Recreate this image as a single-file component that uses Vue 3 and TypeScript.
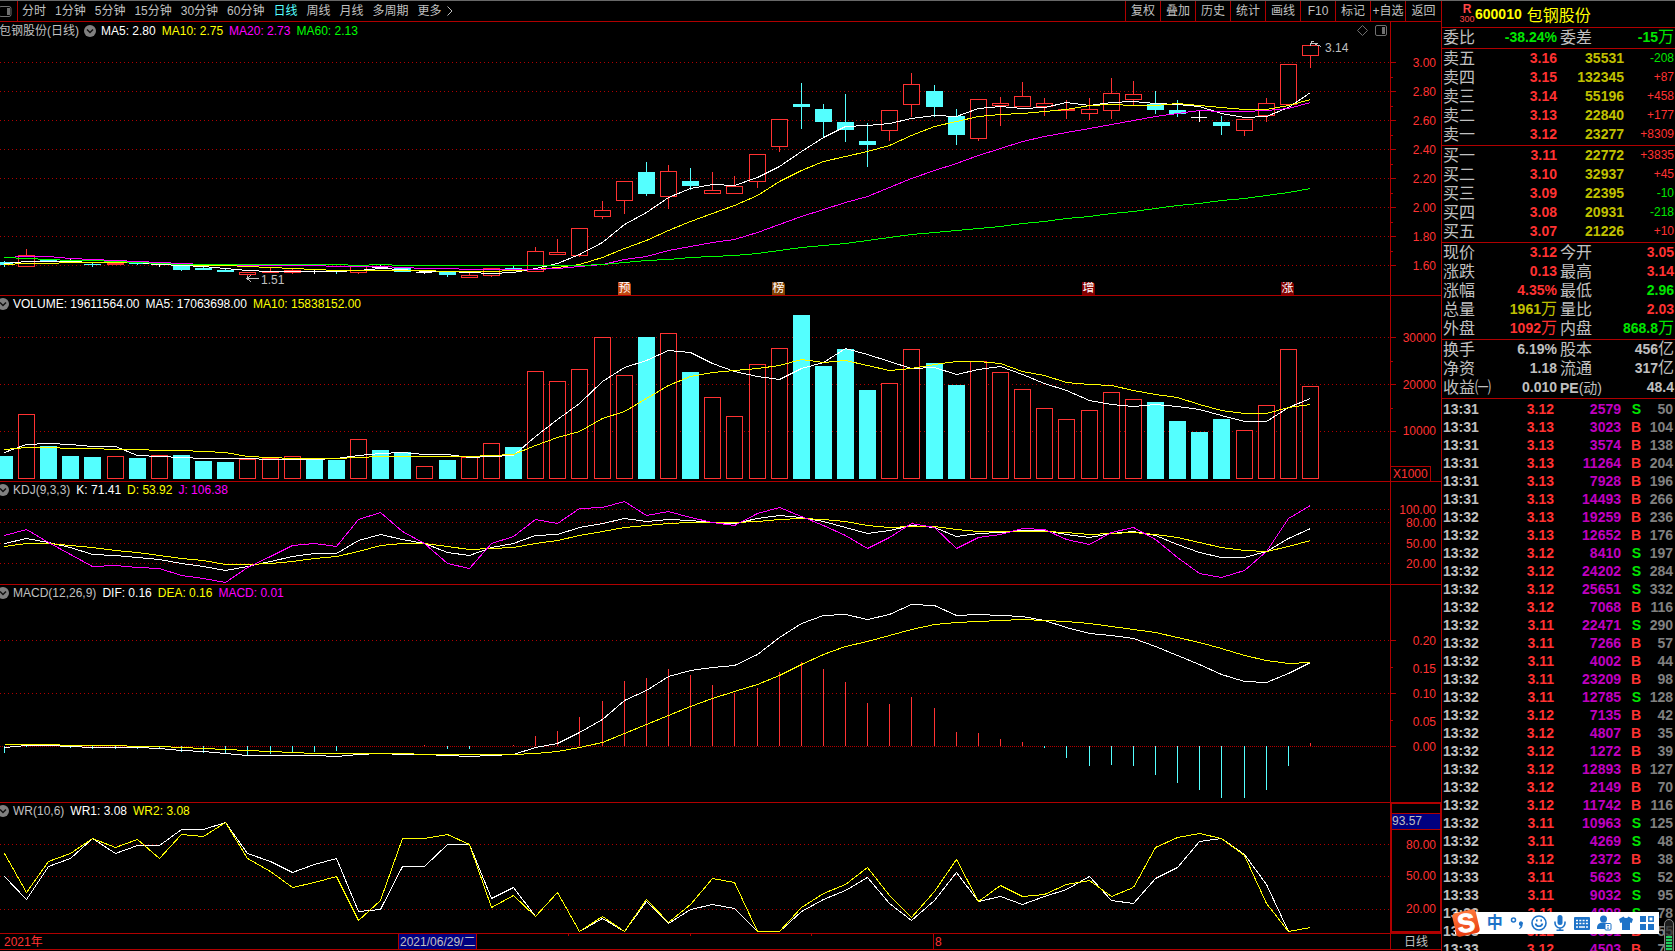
<script setup lang="ts">
type Kind = 'u' | 'd' | 'w'
interface Series { color: string; ys: number[] }
interface Label { y: number; text: string }
interface Tag { text: string; color: string }
interface Mark { x: number; text: string; color: string }
interface Panel {
  id: string
  top: number
  height: number
  name?: string
  title?: string
  tags: Tag[]
  grid: number[]
  dense?: number
  ticks: number[]
  minor: number[]
  labels: Label[]
  series: Series[]
}

const W = 1390
const WHITE = '#ffffff'
const YELLOW = '#ffff00'
const PINK = '#ff00ff'
const GREEN = '#00ff00'

const xAt = (i: number) => Math.floor(4.4 + i * 22.136)
const points = (ys: number[]) => ys.map((y, i) => `${xAt(i) + 0.5},${y + 0.5}`).join(' ')
const pct = (v: number, from: number, size: number) => `${((v - from) / size) * 100}%`

const periods = ['分时', '1分钟', '5分钟', '15分钟', '30分钟', '60分钟', '日线', '周线', '月线', '多周期', '更多']
const tools = ['复权', '叠加', '历史', '统计', '画线', 'F10', '标记', '+自选', '返回']

// kind, high, body top, body bottom, low
const candles: [Kind, number, number, number, number][] = [
  ['d', 261, 262, 265, 267], ['u', 249, 255, 267, 267], ['d', 260, 260, 261, 261], ['w', 258, 262, 262, 263],
  ['d', 263, 264, 265, 267], ['u', 260, 263, 265, 265], ['d', 262, 263, 264, 265], ['w', 263, 264, 264, 267],
  ['d', 263, 265, 270, 271], ['d', 265, 268, 270, 270], ['d', 268, 270, 272, 272], ['u', 272, 272, 275, 277],
  ['u', 267, 271, 273, 273], ['u', 269, 270, 273, 274], ['w', 270, 271, 271, 274], ['d', 271, 271, 272, 274],
  ['u', 266, 266, 273, 274], ['w', 265, 267, 267, 268], ['d', 268, 268, 272, 272], ['w', 271, 272, 272, 274],
  ['d', 271, 271, 275, 277], ['u', 273, 275, 278, 278], ['u', 268, 268, 276, 277], ['d', 266, 268, 269, 271],
  ['u', 247, 251, 272, 272], ['u', 239, 252, 255, 255], ['u', 228, 228, 256, 257], ['u', 201, 210, 217, 219],
  ['u', 181, 181, 201, 214], ['d', 162, 172, 194, 196], ['u', 165, 171, 197, 209], ['d', 168, 181, 186, 190],
  ['u', 172, 190, 194, 194], ['u', 176, 186, 194, 194], ['u', 154, 154, 182, 188], ['u', 119, 119, 147, 152],
  ['d', 83, 104, 107, 129], ['d', 104, 109, 122, 138], ['d', 94, 122, 130, 142], ['d', 123, 141, 145, 167],
  ['u', 110, 110, 131, 141], ['u', 73, 84, 105, 117], ['d', 85, 91, 107, 117], ['d', 109, 116, 135, 145],
  ['u', 99, 99, 139, 141], ['u', 97, 103, 106, 126], ['u', 82, 96, 107, 107], ['u', 98, 103, 107, 116],
  ['u', 100, 109, 111, 119], ['u', 98, 109, 114, 120], ['u', 78, 93, 111, 119], ['u', 81, 94, 100, 105],
  ['d', 91, 104, 110, 114], ['d', 100, 110, 114, 117], ['w', 111, 117, 117, 122], ['d', 116, 122, 126, 135],
  ['u', 119, 119, 131, 136], ['u', 98, 103, 116, 122], ['u', 64, 64, 105, 105], ['u', 45, 45, 56, 68],
]

const volumeBase = 479
const volumes = [
  456, 414, 446, 456, 457, 456, 458, 455, 455, 461, 462, 459, 458, 456, 459, 460, 439, 450, 452, 466,
  460, 457, 443, 447, 371, 381, 369, 337, 375, 337, 333, 372, 397, 416, 364, 348, 315, 366, 349, 390,
  383, 349, 363, 385, 361, 372, 389, 408, 419, 410, 392, 399, 402, 421, 432, 419, 430, 405, 349, 386,
]
// flat days that closed above the day before
const flatUp = [7, 19]
const volumeUp = (i: number) => candles[i][0] === 'u' || flatUp.includes(i)

const macdZero = 746
const macd = [
  753, 747, 746, 748, 749, 749, 749, 749, 752, 753, 754, 755, 754, 752, 752, 751, 746, 746, 746, 745,
  749, 749, 746, 745, 736, 731, 717, 701, 681, 678, 669, 675, 685, 693, 688, 672, 662, 669, 682, 703,
  704, 697, 708, 732, 733, 739, 742, 748, 758, 766, 765, 766, 775, 783, 790, 798, 798, 790, 766, 743,
]

const panels: Panel[] = [
  {
    id: 'price', top: 22, height: 273, name: '包钢股份(日线)',
    tags: [
      { text: 'MA5: 2.80', color: WHITE }, { text: 'MA10: 2.75', color: YELLOW },
      { text: 'MA20: 2.73', color: PINK }, { text: 'MA60: 2.13', color: GREEN },
    ],
    grid: [62, 91, 120, 149, 178, 207, 236, 265],
    ticks: [62, 91, 120, 149, 178, 207, 236, 265],
    minor: [77, 106, 135, 164, 193, 222, 251],
    labels: ['3.00', '2.80', '2.60', '2.40', '2.20', '2.00', '1.80', '1.60'].map((text, i) => ({ text, y: 62 + i * 29 })),
    series: [
      { color: WHITE, ys: [263, 261, 261, 261, 262, 262, 262, 264, 265, 266, 268, 270, 271, 271, 271, 271, 270, 268, 269, 271, 271, 272, 273, 272, 268, 263, 254, 242, 224, 212, 197, 188, 184, 185, 177, 166, 151, 137, 126, 125, 123, 118, 115, 116, 108, 106, 108, 107, 102, 105, 102, 101, 103, 104, 106, 113, 117, 116, 107, 92] },
      { color: YELLOW, ys: [264, 263, 263, 262, 262, 262, 262, 263, 264, 265, 265, 266, 267, 268, 269, 270, 270, 270, 270, 270, 271, 271, 271, 270, 269, 267, 264, 257, 248, 240, 230, 221, 213, 205, 195, 181, 170, 161, 156, 151, 145, 135, 126, 121, 116, 114, 113, 111, 109, 105, 104, 105, 105, 103, 105, 107, 109, 109, 105, 99] },
      { color: PINK, ys: [257, 256, 256, 258, 259, 260, 261, 262, 263, 264, 264, 265, 265, 265, 265, 266, 266, 266, 267, 268, 268, 269, 269, 269, 269, 268, 266, 264, 259, 256, 250, 246, 242, 239, 232, 224, 216, 209, 202, 196, 187, 178, 170, 163, 155, 148, 141, 136, 132, 128, 124, 120, 116, 113, 110, 111, 111, 110, 108, 102] },
      { color: GREEN, ys: [257, 258, 259, 260, 260, 261, 262, 263, 264, 264, 264, 264, 264, 264, 264, 264, 265, 264, 265, 265, 265, 265, 265, 265, 265, 265, 265, 264, 262, 260, 259, 257, 256, 255, 253, 250, 247, 245, 243, 240, 237, 234, 232, 230, 228, 226, 223, 221, 218, 216, 213, 211, 208, 205, 203, 200, 198, 195, 192, 188] },
    ],
  },
  {
    id: 'volume', top: 296, height: 185,
    tags: [
      { text: 'VOLUME: 19611564.00', color: WHITE }, { text: 'MA5: 17063698.00', color: WHITE },
      { text: 'MA10: 15838152.00', color: YELLOW },
    ],
    grid: [337, 384, 431], ticks: [337, 384, 431], minor: [361, 408],
    labels: [{ y: 337, text: '30000' }, { y: 384, text: '20000' }, { y: 431, text: '10000' }],
    series: [
      { color: WHITE, ys: [452, 444, 443, 444, 446, 446, 455, 456, 457, 458, 458, 458, 459, 459, 459, 458, 455, 453, 452, 454, 454, 457, 456, 455, 436, 419, 403, 381, 367, 360, 350, 352, 363, 371, 376, 379, 368, 362, 348, 354, 361, 368, 367, 374, 369, 366, 374, 383, 390, 400, 404, 406, 404, 406, 409, 415, 421, 421, 407, 398] },
      { color: YELLOW, ys: [449, 447, 447, 448, 448, 449, 449, 450, 450, 451, 452, 456, 457, 458, 458, 458, 457, 456, 456, 456, 456, 456, 455, 454, 445, 437, 431, 418, 411, 398, 385, 376, 372, 370, 368, 365, 359, 362, 360, 365, 370, 368, 364, 361, 361, 363, 371, 375, 382, 384, 385, 390, 394, 397, 404, 410, 413, 413, 407, 404] },
    ],
  },
  {
    id: 'kdj', top: 482, height: 102, title: 'KDJ(9,3,3)',
    tags: [{ text: 'K: 71.41', color: WHITE }, { text: 'D: 53.92', color: YELLOW }, { text: 'J: 106.38', color: PINK }],
    grid: [509, 522, 543, 563], ticks: [], minor: [],
    labels: [{ y: 509, text: '100.00' }, { y: 522, text: '80.00' }, { y: 543, text: '50.00' }, { y: 563, text: '20.00' }],
    series: [
      { color: WHITE, ys: [543, 538, 542, 547, 554, 555, 557, 559, 563, 566, 570, 566, 561, 556, 553, 553, 540, 534, 539, 543, 552, 555, 547, 543, 535, 534, 527, 523, 518, 521, 519, 520, 522, 523, 518, 515, 517, 521, 527, 533, 530, 525, 527, 536, 533, 532, 530, 530, 534, 537, 533, 531, 535, 544, 552, 557, 557, 551, 538, 528] },
      { color: YELLOW, ys: [546, 543, 543, 545, 547, 550, 552, 555, 558, 560, 564, 564, 563, 561, 558, 556, 551, 545, 543, 543, 546, 549, 548, 547, 543, 540, 535, 531, 527, 525, 523, 522, 522, 522, 521, 519, 518, 519, 521, 525, 527, 526, 526, 529, 531, 531, 531, 531, 532, 534, 533, 532, 534, 537, 542, 547, 550, 551, 546, 540] },
      { color: PINK, ys: [535, 529, 542, 554, 566, 565, 567, 568, 575, 578, 582, 567, 556, 545, 543, 546, 519, 512, 531, 543, 563, 568, 543, 536, 519, 523, 508, 507, 501, 515, 511, 517, 522, 525, 513, 507, 516, 525, 535, 548, 537, 523, 527, 548, 537, 534, 528, 529, 539, 544, 532, 527, 539, 557, 573, 577, 570, 551, 518, 505] },
    ],
  },
  {
    id: 'macd', top: 585, height: 217, title: 'MACD(12,26,9)',
    tags: [{ text: 'DIF: 0.16', color: WHITE }, { text: 'DEA: 0.16', color: YELLOW }, { text: 'MACD: 0.01', color: PINK }],
    grid: [640, 693], dense: 746, ticks: [640, 693, 746], minor: [667, 720],
    labels: [{ y: 640, text: '0.20' }, { y: 668, text: '0.15' }, { y: 693, text: '0.10' }, { y: 721, text: '0.05' }, { y: 746, text: '0.00' }],
    series: [
      { color: WHITE, ys: [747, 745, 745, 746, 747, 747, 747, 748, 750, 751, 753, 755, 755, 755, 755, 756, 754, 753, 754, 754, 755, 756, 755, 754, 747, 743, 732, 719, 700, 690, 676, 670, 667, 665, 654, 637, 623, 615, 614, 619, 614, 604, 605, 615, 614, 615, 616, 620, 627, 633, 635, 638, 646, 655, 664, 674, 681, 682, 673, 662] },
      { color: YELLOW, ys: [744, 744, 744, 745, 745, 745, 746, 746, 747, 748, 749, 750, 751, 752, 753, 753, 753, 753, 753, 754, 754, 754, 754, 754, 753, 751, 747, 742, 733, 724, 715, 706, 698, 691, 684, 675, 664, 654, 646, 641, 635, 629, 624, 622, 621, 620, 619, 620, 621, 623, 626, 629, 632, 637, 642, 648, 655, 660, 663, 662] },
    ],
  },
  {
    id: 'wr', top: 803, height: 130, title: 'WR(10,6)',
    tags: [{ text: 'WR1: 3.08', color: WHITE }, { text: 'WR2: 3.08', color: YELLOW }],
    grid: [844, 876, 909], ticks: [], minor: [],
    labels: [{ y: 844, text: '80.00' }, { y: 876, text: '50.00' }, { y: 910, text: '20.00' }],
    series: [
      { color: WHITE, ys: [876, 899, 866, 858, 838, 853, 845, 845, 829, 829, 822, 853, 861, 872, 864, 858, 911, 909, 866, 866, 844, 844, 898, 887, 916, 892, 931, 918, 931, 901, 923, 909, 904, 908, 931, 931, 911, 899, 890, 877, 903, 920, 900, 872, 901, 896, 904, 896, 889, 876, 900, 903, 878, 867, 841, 838, 854, 884, 931, 927] },
      { color: YELLOW, ys: [853, 892, 861, 853, 838, 847, 839, 858, 834, 836, 822, 858, 871, 887, 882, 876, 920, 900, 838, 838, 834, 844, 907, 895, 916, 892, 931, 916, 931, 899, 922, 904, 878, 882, 931, 931, 907, 893, 884, 867, 895, 917, 891, 859, 901, 885, 896, 894, 884, 880, 896, 887, 847, 837, 833, 838, 855, 903, 931, 927] },
    ],
  },
]

const marks: Mark[] = [
  { x: 618, text: '预', color: '#c04810' },
  { x: 772, text: '榜', color: '#804000' },
  { x: 1082, text: '增', color: '#800000' },
  { x: 1281, text: '涨', color: '#800000' },
]

const dateTicks = [568, 690, 811]

const sells = [
  ['卖五', '3.16', '35531', '-208'], ['卖四', '3.15', '132345', '+87'], ['卖三', '3.14', '55196', '+458'],
  ['卖二', '3.13', '22840', '+177'], ['卖一', '3.12', '23277', '+8309'],
]
const buys = [
  ['买一', '3.11', '22772', '+3835'], ['买二', '3.10', '32937', '+45'], ['买三', '3.09', '22395', '-10'],
  ['买四', '3.08', '20931', '-218'], ['买五', '3.07', '21226', '+10'],
]
const books = [sells, buys]

interface Stat { label: string; value: string; unit?: string; tone: string }
const ratio: Stat[][] = [[
  { label: '委比', value: '-38.24%', tone: 'green' }, { label: '委差', value: '-15', unit: '万', tone: 'green' },
]]
const quote: Stat[][] = [
  [{ label: '现价', value: '3.12', tone: 'red' }, { label: '今开', value: '3.05', tone: 'red' }],
  [{ label: '涨跌', value: '0.13', tone: 'red' }, { label: '最高', value: '3.14', tone: 'red' }],
  [{ label: '涨幅', value: '4.35%', tone: 'red' }, { label: '最低', value: '2.96', tone: 'green' }],
  [{ label: '总量', value: '1961', unit: '万', tone: 'gold' }, { label: '量比', value: '2.03', tone: 'red' }],
  [{ label: '外盘', value: '1092', unit: '万', tone: 'red' }, { label: '内盘', value: '868.8', unit: '万', tone: 'green' }],
]
const basics: Stat[][] = [
  [{ label: '换手', value: '6.19%', tone: 'gray' }, { label: '股本', value: '456', unit: '亿', tone: 'gray' }],
  [{ label: '净资', value: '1.18', tone: 'gray' }, { label: '流通', value: '317', unit: '亿', tone: 'gray' }],
  [{ label: '收益㈠', value: '0.010', tone: 'gray' }, { label: 'PE(动)', value: '48.4', tone: 'gray' }],
]
const stats = [quote, basics]

const trades = `13:31 3.12 2579 S 50
13:31 3.13 3023 B 104
13:31 3.13 3574 B 138
13:31 3.13 11264 B 204
13:31 3.13 7928 B 196
13:31 3.13 14493 B 266
13:32 3.13 19259 B 236
13:32 3.13 12652 B 176
13:32 3.12 8410 S 197
13:32 3.12 24202 S 284
13:32 3.12 25651 S 332
13:32 3.12 7068 B 116
13:32 3.11 22471 S 290
13:32 3.11 7266 B 57
13:32 3.11 4002 B 44
13:32 3.11 23209 B 98
13:32 3.11 12785 S 128
13:32 3.12 7135 B 42
13:32 3.12 4807 B 35
13:32 3.12 1272 B 39
13:32 3.12 12893 B 127
13:32 3.12 2149 B 70
13:32 3.12 11742 B 116
13:32 3.11 10963 S 125
13:32 3.11 4269 S 48
13:32 3.12 2372 B 38
13:33 3.11 5623 S 52
13:33 3.11 9032 S 95
13:33 3.11 4998 S 78
13:33 3.12 8861 B 55
13:33 3.12 4503 B 70`.split('\n').map((row) => row.split(' '))
</script>

<template>
  <div class="app">
    <main class="charts">
      <nav class="toolbar">
        <button class="toggle" aria-label="侧栏">
          <svg width="12" height="11" viewBox="0 0 12 11"><rect x="-1" y="0.5" width="12" height="10" rx="2" fill="none" stroke="#707070" /><rect x="7" y="2" width="3" height="7" fill="#707070" /></svg>
        </button>
        <div class="periods">
          <button v-for="p in periods" :key="p" :class="{ active: p === '日线' }">{{ p }}</button>
          <svg class="more" width="6" height="10" viewBox="0 0 6 10"><path d="M.5.5 5 5 .5 9.5" fill="none" stroke="#c0c0c0" /></svg>
        </div>
        <div class="tools">
          <button v-for="t in tools" :key="t">{{ t }}</button>
        </div>
      </nav>

      <section v-for="p in panels" :key="p.id" class="panel" :class="p.id">
        <div class="plot">
          <svg class="canvas" :viewBox="`0 ${p.top} ${W} ${p.height}`" preserveAspectRatio="none">
            <line v-for="g in p.grid" :key="g" class="grid" x1="0" :x2="W" :y1="g + 0.5" :y2="g + 0.5" />
            <line v-if="p.dense" class="grid dense" x1="0" :x2="W" :y1="p.dense + 0.5" :y2="p.dense + 0.5" />

            <g v-if="p.id === 'price'">
              <g v-for="(c, i) in candles" :key="i" :class="c[0]">
                <template v-if="c[0] === 'u'">
                  <rect :x="xAt(i) - 7.5" :y="c[2] + 0.5" width="16" :height="Math.max(c[3] - c[2] - 1, 1)" />
                  <line v-if="c[1] < c[2]" :x1="xAt(i) + 0.5" :x2="xAt(i) + 0.5" :y1="c[1]" :y2="c[2]" />
                  <line v-if="c[4] > c[3]" :x1="xAt(i) + 0.5" :x2="xAt(i) + 0.5" :y1="c[3]" :y2="c[4]" />
                </template>
                <template v-else-if="c[0] === 'd'">
                  <rect :x="xAt(i) - 8" :y="c[2]" width="17" :height="c[3] - c[2]" />
                  <line :x1="xAt(i) + 0.5" :x2="xAt(i) + 0.5" :y1="c[1]" :y2="c[4]" />
                </template>
                <template v-else>
                  <line :x1="xAt(i) - 8" :x2="xAt(i) + 8" :y1="c[2] + 0.5" :y2="c[2] + 0.5" />
                  <line :x1="xAt(i) + 0.5" :x2="xAt(i) + 0.5" :y1="c[1]" :y2="c[4]" />
                </template>
              </g>
              <path class="pointer" d="M258.5 278.5H247M251 275l-4 3.5 4 3.5M247.5 278v-2" />
              <path class="pointer" d="M1321 46.500 1311 42.500M1310.500 46V43M1310 43.500H1318M1311 41.500h3" />
            </g>

            <g v-if="p.id === 'volume'">
              <g v-for="(v, i) in volumes" :key="i" :class="volumeUp(i) ? 'u' : 'd'">
                <rect v-if="volumeUp(i)" :x="xAt(i) - 7.5" :y="v + 0.5" width="16" :height="volumeBase - v - 1" />
                <rect v-else :x="xAt(i) - 8" :y="v" width="17" :height="volumeBase - v" />
              </g>
            </g>

            <g v-if="p.id === 'macd'">
              <line v-for="(m, i) in macd" :key="i" :class="m < macdZero ? 'bar-up' : 'bar-down'" :x1="xAt(i) + 0.5" :x2="xAt(i) + 0.5" :y1="macdZero" :y2="m" />
            </g>

            <polyline v-for="(s, i) in p.series" :key="i" :points="points(s.ys)" fill="none" :stroke="s.color" />
          </svg>

          <header class="title">
            <span v-if="p.name" class="name">{{ p.name }}</span>
            <button class="fold" aria-label="指标菜单">
              <svg width="12" height="12" viewBox="0 0 12 12"><circle cx="6" cy="6" r="6" fill="#808080" /><path d="m3 4.500 3 3 3-3" fill="none" stroke="#101010" stroke-width="1.500" /></svg>
            </button>
            <span class="tags">
              <span v-if="p.title">{{ p.title }}</span>
              <span v-for="t in p.tags" :key="t.text" :style="{ color: t.color }">{{ t.text }}</span>
            </span>
            <span v-if="p.name" class="corner">
              <svg width="11" height="12" viewBox="0 0 11 12"><path d="M5.500.5 10.500 5.500 5.500 10.500.5 5.500z" fill="none" stroke="#707070" /></svg>
              <svg width="12" height="12" viewBox="0 0 12 12"><rect x=".5" y=".5" width="11" height="10" rx="1.500" fill="none" stroke="#707070" /><rect x="7" y="2" width="3" height="7" fill="#707070" /></svg>
            </span>
          </header>

          <template v-if="p.id === 'price'">
            <span class="note" :style="{ left: pct(261, 0, W), top: pct(280, p.top, p.height) }">1.51</span>
            <span class="note" :style="{ left: pct(1325, 0, W), top: pct(48, p.top, p.height) }">3.14</span>
            <span v-for="m in marks" :key="m.text" class="mark" :style="{ left: pct(m.x, 0, W), background: m.color }">{{ m.text }}</span>
          </template>
        </div>

        <div class="axis">
          <svg class="canvas" :viewBox="`0 ${p.top} 50 ${p.height}`" preserveAspectRatio="none">
            <line v-for="t in p.ticks" :key="t" x1="0" x2="5" :y1="t + 0.5" :y2="t + 0.5" />
            <line v-for="t in p.minor" :key="t" x1="0" x2="2" :y1="t + 0.5" :y2="t + 0.5" />
          </svg>
          <span v-for="l in p.labels" :key="l.text" class="scale" :style="{ top: pct(l.y + 0.5, p.top, p.height) }">{{ l.text }}</span>
          <span v-if="p.id === 'volume'" class="factor">X1000</span>
          <span v-if="p.id === 'wr'" class="cursor-value">93.57</span>
        </div>
      </section>

      <footer class="dates">
        <div class="timeline">
          <span class="date year" :style="{ left: pct(4, 0, W) }">2021年</span>
          <span class="date current" :style="{ left: pct(398, 0, W) }">2021/06/29/二</span>
          <i v-for="t in dateTicks" :key="t" class="tick" :style="{ left: pct(t, 0, W) }"></i>
          <span class="date month" :style="{ left: pct(933, 0, W) }">8</span>
        </div>
        <button class="unit-button">日线</button>
      </footer>
    </main>

    <aside class="side">
      <header class="stock">
        <span class="flags"><b>R</b><small>300</small></span>
        <b class="code">600010</b>
        <span class="stock-name">包钢股份</span>
      </header>

      <table class="stat">
        <tbody>
          <tr v-for="(row, r) in ratio" :key="r">
            <template v-for="s in row" :key="s.label">
              <th scope="row">{{ s.label }}</th>
              <td :class="s.tone">{{ s.value }}<span v-if="s.unit" class="unit">{{ s.unit }}</span></td>
            </template>
          </tr>
        </tbody>
      </table>

      <table v-for="(book, b) in books" :key="'b' + b" class="book">
        <tbody>
          <tr v-for="row in book" :key="row[0]">
            <th scope="row">{{ row[0] }}</th>
            <td class="red">{{ row[1] }}</td>
            <td class="gold">{{ row[2] }}</td>
            <td class="delta" :class="row[3][0] === '-' ? 'green' : 'red'">{{ row[3] }}</td>
          </tr>
        </tbody>
      </table>

      <table v-for="(group, g) in stats" :key="'s' + g" class="stat">
        <tbody>
          <tr v-for="(row, r) in group" :key="r">
            <template v-for="s in row" :key="s.label">
              <th scope="row"><template v-if="s.label === 'PE(动)'"><b class="pe">PE</b><span class="dyn">(动)</span></template><template v-else>{{ s.label }}</template></th>
              <td :class="s.tone">{{ s.value }}<span v-if="s.unit" class="unit">{{ s.unit }}</span></td>
            </template>
          </tr>
        </tbody>
      </table>

      <div class="trades">
        <table>
          <tbody>
            <tr v-for="(t, i) in trades" :key="i">
              <td class="time">{{ t[0] }}</td>
              <td class="red">{{ t[1] }}</td>
              <td class="size">{{ t[2] }}</td>
              <td :class="t[3] === 'S' ? 'green' : 'red'">{{ t[3] }}</td>
              <td class="count">{{ t[4] }}</td>
            </tr>
          </tbody>
        </table>
      </div>
    </aside>

    <div class="gauge"><i></i></div>

    <div class="ime">
      <svg class="sogou" width="28" height="28" viewBox="0 0 28 28">
        <defs><linearGradient id="flame" x1="0" y1="0" x2="0" y2="1"><stop offset="0" stop-color="#ff7a3c" /><stop offset="1" stop-color="#e83c10" /></linearGradient></defs>
        <rect x="2" y="2" width="24" height="24" rx="4" fill="url(#flame)" transform="rotate(-13 14 14)" />
        <text x="14" y="23" text-anchor="middle" font-family="Liberation Sans, Arial, sans-serif" font-weight="700" font-size="26" fill="#fff" stroke="#fff" transform="rotate(-8 14 14)">S</text>
      </svg>
      <button class="lang">中</button>
      <button aria-label="标点">
        <svg width="14" height="16" viewBox="0 0 14 16"><circle cx="3.500" cy="5" r="2" fill="none" stroke="#1e73c8" stroke-width="1.500" /><path d="M9 8.500a2 2 0 1 1 3.600 1c0 2-1 3.500-3 4.500l-.6-.8c1-.7 1.500-1.400 1.500-2.300A2 2 0 0 1 9 8.500z" fill="#1e73c8" /></svg>
      </button>
      <button aria-label="表情">
        <svg width="16" height="16" viewBox="0 0 16 16" fill="none" stroke="#1e73c8" stroke-width="1.600"><circle cx="8" cy="8" r="7" /><path d="M4.500 8.500a3.600 3.600 0 0 0 7 0M5.800 4.500v2M10.200 4.500v2" /></svg>
      </button>
      <button aria-label="语音">
        <svg width="14" height="16" viewBox="0 0 14 16"><rect x="4.500" y="0" width="5" height="10" rx="2.500" fill="#1e73c8" /><path d="M2 6.500V8a5 5 0 0 0 10 0V6.500M7 13v2.500M3.500 15.200h7" fill="none" stroke="#1e73c8" stroke-width="1.600" /></svg>
      </button>
      <button aria-label="键盘">
        <svg width="16" height="13" viewBox="0 0 16 13"><rect width="16" height="13" rx="1" fill="#1e73c8" /><path d="M2 3.500h12M2 6.500h12" stroke="#fff" stroke-width="1.600" stroke-dasharray="2 1.300" /><path d="M2 10h2M5 10h6M12 10h2" stroke="#fff" stroke-width="1.500" /></svg>
      </button>
      <button aria-label="账户">
        <svg width="15" height="16" viewBox="0 0 15 16"><circle cx="6.500" cy="4" r="3.500" fill="#1e73c8" /><path d="M0 13c0-4 2.500-5.500 6.500-5.500S12 9 12 11v3H0z" fill="#1e73c8" /><rect x="8" y="8.500" width="6" height="6.500" rx="1" fill="#fff" stroke="#1e73c8" /><path d="M11 10v1.200M11 12.500v1.200" stroke="#1e73c8" stroke-width="1.500" /></svg>
      </button>
      <button aria-label="皮肤">
        <svg width="14" height="14" viewBox="0 0 14 14"><path d="M0 3 4.500.5a2.800 2.800 0 0 0 5 0L14 3l-1.300 4-1.700-.6V14H3V6.400L1.300 7z" fill="#1e73c8" /></svg>
      </button>
      <button aria-label="工具箱">
        <svg width="14" height="14" viewBox="0 0 14 14"><path d="M0 0h6v6H0zM0 8h6v6H0zM8 8h6v6H8z" fill="#1e73c8" /><rect x="8.800" y=".8" width="4.400" height="4.400" fill="none" stroke="#1e73c8" stroke-width="1.500" /></svg>
      </button>
    </div>
  </div>
</template>

<style>
body {
  margin: 0;
  background: #000;
}
</style>

<style scoped>
.app {
  --line: #b00000;
  --red: #ff3232;
  --cyan: #54ffff;
  --gray: #c0c0c0;
  box-sizing: border-box;
  position: relative;
  display: grid;
  grid-template-columns: minmax(0, 1fr) 234px;
  height: 100vh;
  overflow: hidden;
  background: #000;
  border-top: 1px solid #686868;
  color: var(--gray);
  font: 12px "Liberation Sans", Arial, "Noto Sans CJK SC", sans-serif;
}
button {
  padding: 0;
  border: 0;
  background: none;
  color: inherit;
  font: inherit;
  white-space: nowrap;
}
svg {
  display: block;
}
.charts {
  display: grid;
  grid-template-rows: 21px 274fr 186fr 103fr 218fr 131fr minmax(0, 16fr) 1px;
  min-height: 0;
}
.toolbar {
  display: flex;
  border-bottom: 1px solid var(--line);
  line-height: 20px;
}
.toggle {
  display: flex;
  align-items: center;
  width: 18px;
  border-right: 1px solid var(--line);
}
.periods {
  display: flex;
  align-items: center;
  gap: 9px;
  padding-left: 4px;
}
.more {
  margin-left: -4px;
}
.active {
  color: var(--cyan);
}
.tools {
  display: flex;
  margin-left: auto;
}
.tools button {
  box-sizing: border-box;
  width: 35px;
  border-left: 1px solid var(--line);
}
.tools button:last-child {
  width: 36px;
}
.panel {
  display: grid;
  grid-template-columns: minmax(0, 1fr) 51px;
  border-bottom: 1px solid var(--line);
  min-height: 0;
}
.plot,
.axis {
  position: relative;
  display: grid;
  grid-template-columns: minmax(0, 1fr);
  min-height: 0;
}
.axis {
  border-left: 1px solid var(--line);
}
.wr .axis {
  border: 2px solid var(--line);
  border-right-width: 1px;
  border-top-width: 1px;
}
.canvas {
  grid-area: 1 / 1;
  width: 100%;
  height: 100%;
  min-height: 0;
  overflow: hidden;
  shape-rendering: crispEdges;
}
.canvas * {
  vector-effect: non-scaling-stroke;
}
.grid {
  stroke: var(--line);
  stroke-dasharray: 1 3;
}
.dense {
  stroke-dasharray: 1 1;
}
.u rect {
  fill: #000;
  stroke: var(--red);
}
.u line,
.bar-up {
  stroke: var(--red);
}
.d rect {
  fill: var(--cyan);
}
.d line,
.bar-down {
  stroke: var(--cyan);
}
.w line {
  stroke: #fff;
}
.pointer {
  fill: none;
  stroke: var(--gray);
}
.axis line {
  stroke: var(--line);
}
.title {
  grid-area: 1 / 1;
  align-self: start;
  display: flex;
  align-items: center;
  height: 16px;
  line-height: 16px;
  margin-left: -3px;
  gap: 4px;
  white-space: nowrap;
  z-index: 1;
}
.price .title {
  height: 18px;
  margin-left: -1px;
  gap: 5px;
}
.tags {
  display: flex;
  gap: 6px;
}
.corner {
  display: flex;
  gap: 7px;
  margin-left: auto;
  padding-right: 3px;
}
.note {
  position: absolute;
  line-height: 14px;
  margin-top: -7px;
}
.mark {
  position: absolute;
  bottom: 0;
  width: 13px;
  height: 13px;
  line-height: 13px;
  text-align: center;
  color: #fff;
  clip-path: polygon(0 0, 11px 0, 13px 2px, 13px 13px, 0 13px);
}
.scale {
  position: absolute;
  right: 5px;
  line-height: 14px;
  margin-top: -7px;
  color: var(--red);
}
.wr .scale {
  right: 4px;
}
.factor {
  position: absolute;
  left: 0;
  bottom: 0;
  width: 39px;
  height: 14px;
  line-height: 14px;
  text-indent: 2px;
  border: 1px solid var(--line);
  border-width: 1px 1px 0 0;
  color: var(--red);
}
.cursor-value {
  position: absolute;
  left: 0;
  right: 0;
  top: 9px;
  height: 15px;
  line-height: 15px;
  border: 1px solid var(--line);
  border-width: 1px 0;
  background: #000080;
}
.dates {
  display: grid;
  grid-template-columns: minmax(0, 1fr) 51px;
  grid-template-rows: minmax(0, 1fr);
  min-height: 0;
  border-bottom: 1px solid var(--line);
  line-height: 17px;
}
.timeline {
  position: relative;
}
.date {
  position: absolute;
  top: 0;
  bottom: 0;
  white-space: nowrap;
}
.year {
  color: var(--red);
}
.current {
  padding: 0 1px;
  border: 1px solid var(--line);
  border-width: 0 1px;
  background: #000080;
}
.tick {
  position: absolute;
  top: 0;
  width: 1px;
  height: 2px;
  background: var(--line);
}
.month {
  padding-left: 1px;
  border-left: 1px solid var(--line);
  color: var(--red);
}
.unit-button {
  border-left: 1px solid var(--line);
  line-height: 17px;
}
.side {
  display: flex;
  flex-direction: column;
  min-height: 0;
  overflow: hidden;
  border-left: 1px solid var(--line);
}
.stock {
  flex: none;
  display: flex;
  align-items: center;
  height: 26px;
  padding-left: 17px;
  color: #ffff00;
  white-space: nowrap;
}
.flags {
  display: flex;
  flex-direction: column;
  align-items: center;
  width: 16px;
  color: #ff4646;
  line-height: 10px;
}
.flags small {
  font-size: 9px;
}
.code {
  font-size: 14px;
}
.stock-name {
  margin-left: 5px;
  font-size: 16px;
}
table {
  width: 100%;
  border-collapse: collapse;
  table-layout: fixed;
}
.book,
.stat {
  flex: none;
  display: block;
  border-top: 1px solid var(--line);
  padding-bottom: 1px;
}
tbody {
  display: block;
}
.book tr,
.stat tr,
.trades tr {
  display: grid;
  height: 19px;
  line-height: 19px;
  font-size: 14px;
  font-weight: 700;
}
.book tr {
  grid-template-columns: 48px 67px 67px 50px;
}
.stat tr {
  grid-template-columns: 50px 65px 56px 61px;
}
th,
td {
  padding: 0;
  white-space: nowrap;
  text-align: right;
}
th {
  padding-left: 1px;
  text-align: left;
  font-size: 16px;
  font-weight: 400;
}
.stat td + th {
  padding-left: 3px;
}
.unit {
  font-size: 16px;
  font-weight: 400;
  line-height: 16px;
}
.pe,
.dyn {
  font-size: 14px;
}
.delta {
  font-size: 12px;
  font-weight: 400;
}
.red {
  color: var(--red);
}
.green {
  color: #00e600;
}
.gold {
  color: #c0c000;
}
.gray {
  color: var(--gray);
}
.trades {
  flex: 1;
  min-height: 0;
  overflow: hidden;
  border-top: 1px solid var(--line);
  padding-top: 1px;
}
.trades tr {
  grid-template-columns: 50px 62px 67px 20px 32px;
  height: 18px;
  line-height: 18px;
}
.time {
  padding-left: 1px;
  text-align: left;
}
.size {
  color: #c000c0;
}
.count {
  color: #808080;
}
.ime {
  position: absolute;
  right: 16px;
  bottom: 17px;
  display: flex;
  align-items: center;
  justify-content: space-between;
  box-sizing: border-box;
  width: 204px;
  height: 22px;
  padding: 0 5px 0 0;
  background: #fff;
  color: #1e73c8;
}
.sogou {
  flex: none;
  margin-left: -3px;
}
.lang {
  font-size: 16px;
  font-weight: 700;
  line-height: 20px;
}
.gauge {
  position: absolute;
  right: 1px;
  bottom: -6px;
  box-sizing: border-box;
  width: 10px;
  height: 38px;
  padding: 16px 1px 0;
  border: 1px solid #808080;
  border-radius: 5px;
  background: rgba(40, 40, 40, 0.7);
}
.gauge i {
  display: block;
  height: 100%;
  background: repeating-linear-gradient(#20d060 0 2px, #103818 2px 3px);
}
</style>
